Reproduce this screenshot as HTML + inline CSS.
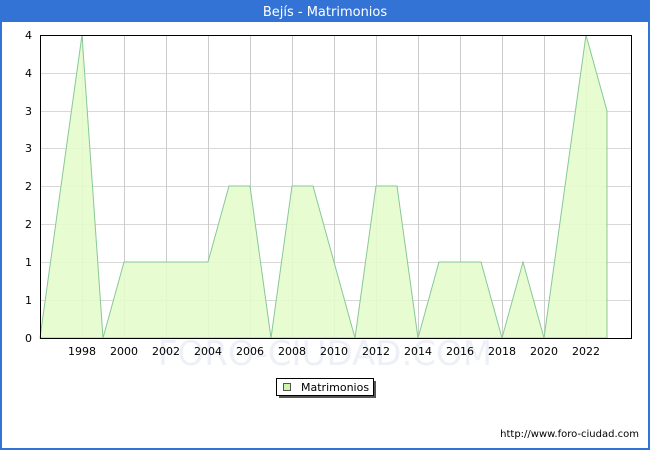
<!DOCTYPE html><html><head><style>body{margin:0;width:650px;height:450px;overflow:hidden;font-family:"DejaVu Sans","Liberation Sans",sans-serif}</style></head><body>
<svg width="650" height="450" xmlns="http://www.w3.org/2000/svg" font-family="DejaVu Sans, Liberation Sans, sans-serif">
<rect x="0" y="0" width="650" height="450" fill="#3373d6"/>
<rect x="2" y="22" width="646" height="426" fill="#fff"/>
<text x="325" y="16" fill="#fff" font-size="13" text-anchor="middle">Bejís - Matrimonios</text>
<g stroke="#d8d8d8" stroke-width="1">
<line x1="40" x2="631" y1="73.5" y2="73.5"/><line x1="40" x2="631" y1="111.5" y2="111.5"/><line x1="40" x2="631" y1="148.5" y2="148.5"/><line x1="40" x2="631" y1="186.5" y2="186.5"/><line x1="40" x2="631" y1="224.5" y2="224.5"/><line x1="40" x2="631" y1="262.5" y2="262.5"/><line x1="40" x2="631" y1="300.5" y2="300.5"/>
</g>
<g stroke="#cccccc"><line x1="82.5" x2="82.5" y1="35" y2="338"/><line x1="124.5" x2="124.5" y1="35" y2="338"/><line x1="166.5" x2="166.5" y1="35" y2="338"/><line x1="208.5" x2="208.5" y1="35" y2="338"/><line x1="250.5" x2="250.5" y1="35" y2="338"/><line x1="292.5" x2="292.5" y1="35" y2="338"/><line x1="334.5" x2="334.5" y1="35" y2="338"/><line x1="376.5" x2="376.5" y1="35" y2="338"/><line x1="418.5" x2="418.5" y1="35" y2="338"/><line x1="460.5" x2="460.5" y1="35" y2="338"/><line x1="502.5" x2="502.5" y1="35" y2="338"/><line x1="544.5" x2="544.5" y1="35" y2="338"/><line x1="586.5" x2="586.5" y1="35" y2="338"/></g>
<text x="325" y="365" font-size="34" fill="#eef0f8" text-anchor="middle">FORO-CIUDAD.COM</text>
<polygon fill="#e4fccc" fill-opacity="0.9" stroke="#88c898" stroke-width="1" points="40,338 61,186 82,35 103,338 124,262 145,262 166,262 187,262 208,262 229,186 250,186 271,338 292,186 313,186 334,262 355,338 376,186 397,186 418,338 439,262 460,262 481,262 502,338 523,262 544,338 565,186 586,35 607,111 607,338"/>
<rect x="40.5" y="35.5" width="591" height="303" fill="none" stroke="#000"/>
<g font-size="11" fill="#000" text-anchor="end">
<text x="32" y="39">4</text><text x="32" y="77">4</text><text x="32" y="115">3</text><text x="32" y="152">3</text><text x="32" y="190">2</text><text x="32" y="228">2</text><text x="32" y="266">1</text><text x="32" y="304">1</text><text x="32" y="342">0</text></g>
<g font-size="11" fill="#000" text-anchor="middle">
<text x="82" y="355">1998</text><text x="124" y="355">2000</text><text x="166" y="355">2002</text><text x="208" y="355">2004</text><text x="250" y="355">2006</text><text x="292" y="355">2008</text><text x="334" y="355">2010</text><text x="376" y="355">2012</text><text x="418" y="355">2014</text><text x="460" y="355">2016</text><text x="502" y="355">2018</text><text x="544" y="355">2020</text><text x="586" y="355">2022</text></g>
<rect x="279" y="381" width="97" height="17" fill="#555"/>
<rect x="276.5" y="378.5" width="97" height="17" fill="#fff" stroke="#000"/>
<rect x="283.5" y="383.5" width="7" height="7" fill="#ccf5a8" stroke="#555"/>
<text x="301" y="391" font-size="11">Matrimonios</text>
<text x="639" y="437" font-size="10" text-anchor="end">http://www.foro-ciudad.com</text>
</svg></body></html>
